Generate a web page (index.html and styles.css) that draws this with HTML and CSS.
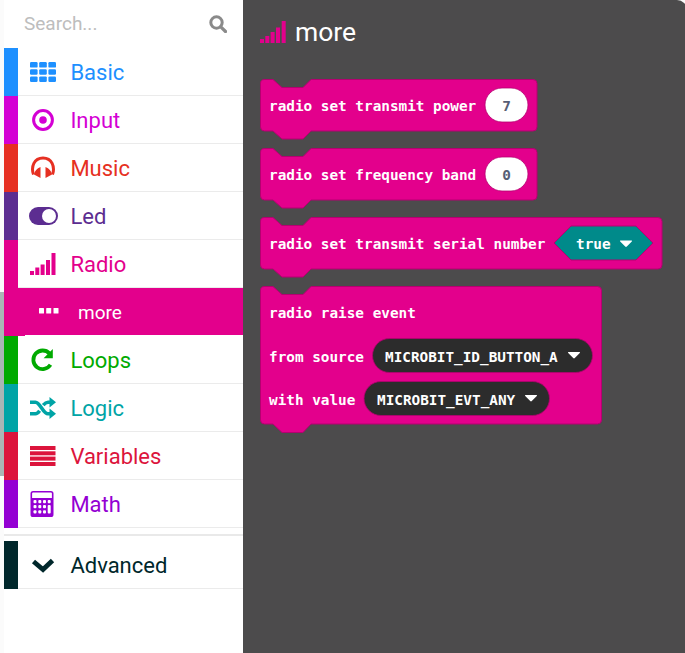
FILE: index.html
```html
<!DOCTYPE html>
<html lang="en">
<head>
<meta charset="utf-8">
<title>Toolbox</title>
<link rel="stylesheet" href="styles.css">
</head>
<body>
<div class="app">
  <aside class="toolbox">
    <div class="search">
      <span class="search-text">Search...</span>
      <svg class="search-icon" viewBox="0 0 18 18"><circle cx="7.500" cy="7.500" r="5.700" fill="none" stroke="#8a8a8a" stroke-width="3"/><path d="M11.800 11.800 16.500 16.500" stroke="#8a8a8a" stroke-width="3.200" stroke-linecap="round"/></svg>
    </div>
    <div class="row c-basic"><span class="strip"></span><div class="cell">
      <svg class="icon" viewBox="0 0 26 20" fill="currentColor"><rect x="0" y="0" width="7.600" height="5.600" rx="1.200"/><rect x="9.200" y="0" width="7.600" height="5.600" rx="1.200"/><rect x="18.400" y="0" width="7.600" height="5.600" rx="1.200"/><rect x="0" y="7.200" width="7.600" height="5.600" rx="1.200"/><rect x="9.200" y="7.200" width="7.600" height="5.600" rx="1.200"/><rect x="18.400" y="7.200" width="7.600" height="5.600" rx="1.200"/><rect x="0" y="14.400" width="7.600" height="5.600" rx="1.200"/><rect x="9.200" y="14.400" width="7.600" height="5.600" rx="1.200"/><rect x="18.400" y="14.400" width="7.600" height="5.600" rx="1.200"/></svg>
      <span class="label">Basic</span></div></div>
    <div class="row c-input"><span class="strip"></span><div class="cell">
      <svg class="icon" viewBox="0 0 26 24"><circle cx="13" cy="12" r="9.400" fill="none" stroke="currentColor" stroke-width="3"/><circle cx="13" cy="12" r="3.800" fill="currentColor"/></svg>
      <span class="label">Input</span></div></div>
    <div class="row c-music"><span class="strip"></span><div class="cell">
      <svg class="icon" viewBox="0 0 26 26"><path d="M3.500 19.500C.8 12 4 3 13 3S25.200 12 22.500 19.500" fill="none" stroke="currentColor" stroke-width="3"/><path d="M10.500 12V23L4 19.500Q5 14 10.500 12zM15.500 12V23L22 19.500Q21 14 15.500 12z" fill="currentColor"/></svg>
      <span class="label">Music</span></div></div>
    <div class="row c-led"><span class="strip"></span><div class="cell">
      <svg class="icon wide" viewBox="0 0 29 18"><rect width="29" height="18" rx="9" fill="currentColor"/><circle cx="20" cy="9" r="7" fill="#fff"/></svg>
      <span class="label">Led</span></div></div>
    <div class="row c-radio"><span class="strip"></span><div class="cell">
      <svg class="icon" viewBox="0 0 26 22" fill="currentColor"><rect x="0" y="18" width="4" height="4"/><rect x="5.300" y="14.500" width="4" height="7.500"/><rect x="10.600" y="11.500" width="4" height="10.500"/><rect x="16" y="7" width="4" height="15"/><rect x="21.500" y="0" width="4" height="22"/></svg>
      <span class="label">Radio</span></div></div>
    <div class="row sub"><span class="strip"></span><div class="cell">
      <svg class="sub-icon" viewBox="0 0 20 6" fill="currentColor"><rect width="5" height="5.500" rx=".6"/><rect x="7.200" width="5" height="5.500" rx=".6"/><rect x="14.500" width="5" height="5.500" rx=".6"/></svg>
      <span class="sub-label">more</span></div></div>
    <div class="row c-loops"><span class="strip"></span><div class="cell">
      <svg class="icon" viewBox="0 0 26 24"><path d="M20.500 16.800A9.300 9.300 0 1 1 19.400 5.400" fill="none" stroke="currentColor" stroke-width="3.800"/><path d="M22.800 1 22.800 10.200 13.600 10.200z" fill="currentColor"/></svg>
      <span class="label">Loops</span></div></div>
    <div class="row c-logic"><span class="strip"></span><div class="cell">
      <svg class="icon" viewBox="0 0 26 22"><path d="M0 5.200H5.500C10 5.200 13 16.800 18 16.800H21M0 16.800H5.500C7 16.800 8.400 15.500 9.600 13.800M13.200 8.200C14.600 6.500 16 5.200 18 5.200H21" fill="none" stroke="currentColor" stroke-width="3.600"/><path d="M19.500 0 26 5.200 19.500 10.400zM19.500 11.600 26 16.800 19.500 22z" fill="currentColor"/></svg>
      <span class="label">Logic</span></div></div>
    <div class="row c-variables"><span class="strip"></span><div class="cell">
      <svg class="icon" viewBox="0 0 26 20" fill="currentColor"><rect width="25.500" height="4"/><rect y="5.300" width="25.500" height="4"/><rect y="10.600" width="25.500" height="4"/><rect y="16" width="25.500" height="4"/></svg>
      <span class="label">Variables</span></div></div>
    <div class="row c-math"><span class="strip"></span><div class="cell">
      <svg class="icon" viewBox="0 0 26 26"><rect x="1.300" y=".8" width="21.400" height="24.400" rx="1.800" fill="#fff" stroke="currentColor" stroke-width="1.600"/><rect x="1.300" y="7" width="21.400" height="18" rx="1" fill="currentColor"/><g fill="#fff"><rect x="3.500" y="9" width="3" height="3.200" rx="1"/><rect x="8.300" y="9" width="3" height="3.200" rx="1"/><rect x="13" y="9" width="3" height="3.200" rx="1"/><rect x="17.700" y="9" width="3" height="3.200" rx="1"/><rect x="3.500" y="14" width="3" height="3.200" rx="1"/><rect x="8.300" y="14" width="3" height="3.200" rx="1"/><rect x="13" y="14" width="3" height="3.200" rx="1"/><rect x="17.700" y="14" width="3" height="8.400" rx="1"/><rect x="3.500" y="19.200" width="3" height="3.200" rx="1"/><rect x="8.300" y="19.200" width="3" height="3.200" rx="1"/><rect x="13" y="19.200" width="3" height="3.200" rx="1"/></g></svg>
      <span class="label">Math</span></div></div>
    <div class="divider"></div>
    <div class="row c-advanced"><span class="strip"></span><div class="cell">
      <svg class="icon" viewBox="0 0 26 16"><path d="M3.500 4.500 13 12.500 22.500 3.500" fill="none" stroke="currentColor" stroke-width="4.800"/></svg>
      <span class="label">Advanced</span></div></div>
  </aside>

  <main class="flyout">
    <header class="flyout-head">
      <svg class="flyout-icon" viewBox="0 0 26 22" fill="#e3008c"><rect x="0" y="18" width="4" height="4"/><rect x="5.300" y="15" width="4" height="7"/><rect x="10.600" y="11" width="4" height="11"/><rect x="16" y="6.500" width="4" height="15.500"/><rect x="21.700" y="0" width="4" height="22"/></svg>
      <h1 class="flyout-title">more</h1>
    </header>
    <div class="blocks">
      <svg class="block" width="278" height="61" viewBox="0 0 278 61">
        <path class="shape" d="M4.500 .5H13L22 8.500H43L51 .5H273a4 4 0 0 1 4 4V48a4 4 0 0 1-4 4H51L43 60H22L13 52H4.500a4 4 0 0 1-4-4V4.500a4 4 0 0 1 4-4z"/>
        <text class="block-text" x="9" y="32">radio set transmit power</text>
        <rect class="num" x="225" y="9" width="43" height="34" rx="17"/>
        <text class="num-text" x="246.500" y="32">7</text>
      </svg>
      <svg class="block" width="278" height="61" viewBox="0 0 278 61">
        <path class="shape" d="M4.500 .5H13L22 8.500H43L51 .5H273a4 4 0 0 1 4 4V48a4 4 0 0 1-4 4H51L43 60H22L13 52H4.500a4 4 0 0 1-4-4V4.500a4 4 0 0 1 4-4z"/>
        <text class="block-text" x="9" y="32">radio set frequency band</text>
        <rect class="num" x="225" y="9" width="43" height="34" rx="17"/>
        <text class="num-text" x="246.500" y="32">0</text>
      </svg>
      <svg class="block" width="403" height="61" viewBox="0 0 403 61">
        <path class="shape" d="M4.500 .5H13L22 8.500H43L51 .5H398a4 4 0 0 1 4 4V48a4 4 0 0 1-4 4H51L43 60H22L13 52H4.500a4 4 0 0 1-4-4V4.500a4 4 0 0 1 4-4z"/>
        <text class="block-text" x="9" y="32">radio set transmit serial number</text>
        <path class="bool" d="M294 26 311 9H376L393 26 376 43H311z"/>
        <text class="block-text" x="316" y="32">true</text>
        <path class="arrow" d="M360.500 23.500H371.500Q372.500 23.500 371.800 24.500L366.800 29.500Q366 30.300 365.200 29.500L360.200 24.500Q359.500 23.500 360.500 23.500z"/>
      </svg>
      <svg class="block" width="343" height="148" viewBox="0 0 343 148">
        <path class="shape" d="M4.500 .5H13L22 8.500H43L51 .5H337.500a4 4 0 0 1 4 4V134a4 4 0 0 1-4 4H51L43 146.500H22L13 138H4.500a4 4 0 0 1-4-4V4.500a4 4 0 0 1 4-4z"/>
        <text class="block-text" x="9" y="32">radio raise event</text>
        <text class="block-text" x="9" y="76">from source</text>
        <rect class="enum" x="112.500" y="52.500" width="220" height="34" rx="17"/>
        <text class="block-text" x="125" y="76">MICROBIT_ID_BUTTON_A</text>
        <path class="arrow" d="M308.500 66H319.500Q320.500 66 319.800 67L314.800 72Q314 72.800 313.200 72L308.200 67Q307.500 66 308.500 66z"/>
        <text class="block-text" x="9" y="119">with value</text>
        <rect class="enum" x="104" y="95.500" width="185.500" height="34" rx="17"/>
        <text class="block-text" x="117" y="119">MICROBIT_EVT_ANY</text>
        <path class="arrow" d="M265.500 109H276.500Q277.500 109 276.800 110L271.800 115Q271 115.800 270.200 115L265.200 110Q264.500 109 265.500 109z"/>
      </svg>
    </div>
  </main>
</div>
</body>
</html>
```
FILE: styles.css
```css
* { box-sizing: border-box; }
html, body { margin: 0; height: 100%; }
body {
  overflow: hidden;
  background: linear-gradient(to bottom, #fbfbfb 0, #fbfbfb 292px, #aab5b5 292px, #aab5b5 476px, #fbfbfb 476px);
}
.app {
  display: flex;
  height: 653px;
  width: 683px;
  margin-left: 4px;
  font-family: Roboto, "Liberation Sans", sans-serif;
}
.toolbox {
  width: 239px;
  flex: none;
  background: #fff;
}
.search {
  height: 48px;
  display: flex;
  align-items: center;
  padding: 0 16px 1px 20px;
  justify-content: space-between;
}
.search-text { font-size: 19px; color: #bdbdbd; }
.search-icon { width: 18px; height: 18px; }
.row {
  display: flex;
  height: 48px;
  position: relative;
}
.strip { width: 14px; flex: none; background: currentColor; }
.cell {
  flex: 1;
  display: flex;
  align-items: center;
  border-bottom: 1px solid #ebebeb;
  padding-top: 1px;
}
.icon { width: 26px; height: 26px; margin-left: 12px; margin-right: 14.400px; flex: none; }
.icon.wide { width: 29px; margin-left: 10.500px; margin-right: 12.900px; }
.label { font-size: 22px; }
.c-basic { color: #1e90ff; }
.c-input { color: #d400d4; }
.c-music { color: #e63022; }
.c-led { color: #5c2d91; }
.c-radio { color: #e3008c; }
.c-loops { color: #00aa00; }
.c-logic { color: #00a4a6; }
.c-variables { color: #dc143c; }
.c-math { color: #9400d3; }
.c-advanced { color: #00272b; }
.sub { color: #e3008c; }
.sub .cell {
  background: #e3008c;
  background-clip: padding-box;
  color: #fff;
  border-bottom: 1px solid #fff;
}
.sub::after {
  content: "";
  position: absolute;
  left: 14px;
  bottom: 0;
  width: 7px;
  height: 1px;
  background: #e3008c;
}
.sub-icon { width: 20px; height: 6px; margin: 0 19px 3px 21px; flex: none; }
.sub-label { font-size: 19px; }
.divider {
  height: 13px;
  background: linear-gradient(to bottom, #fff 0, #fff 6px, #e9e9e9 6px, #e9e9e9 8px, #fff 8px);
}
.flyout {
  flex: 1;
  background: #4c4b4c;
  border-top-right-radius: 10px;
  padding-left: 17px;
}
.flyout-head {
  display: flex;
  align-items: center;
  height: 64px;
  gap: 9px;
}
.flyout-icon { width: 26px; height: 22px; }
.flyout-title { margin: 0 0 2px; font-size: 26.500px; font-weight: 400; color: #fff; }
.blocks {
  display: flex;
  flex-direction: column;
  align-items: flex-start;
  gap: 8px;
  margin-top: 15px;
}
.block { display: block; overflow: visible; }
.shape { fill: #e3008c; stroke: #b50070; stroke-width: 1; }
.block-text, .num-text {
  font-family: "DejaVu Sans Mono", "Liberation Mono", monospace;
  font-weight: 700;
  font-size: 14.350px;
}
.block-text { fill: #fff; }
.num { fill: #fff; stroke: #b50070; stroke-width: .8; }
.num-text { fill: #575e75; text-anchor: middle; }
.bool { fill: #008a8a; stroke: #b50070; stroke-width: 1; }
.enum { fill: #2c2c2c; stroke: #b50070; stroke-width: .8; }
.arrow { fill: #fff; }
```
